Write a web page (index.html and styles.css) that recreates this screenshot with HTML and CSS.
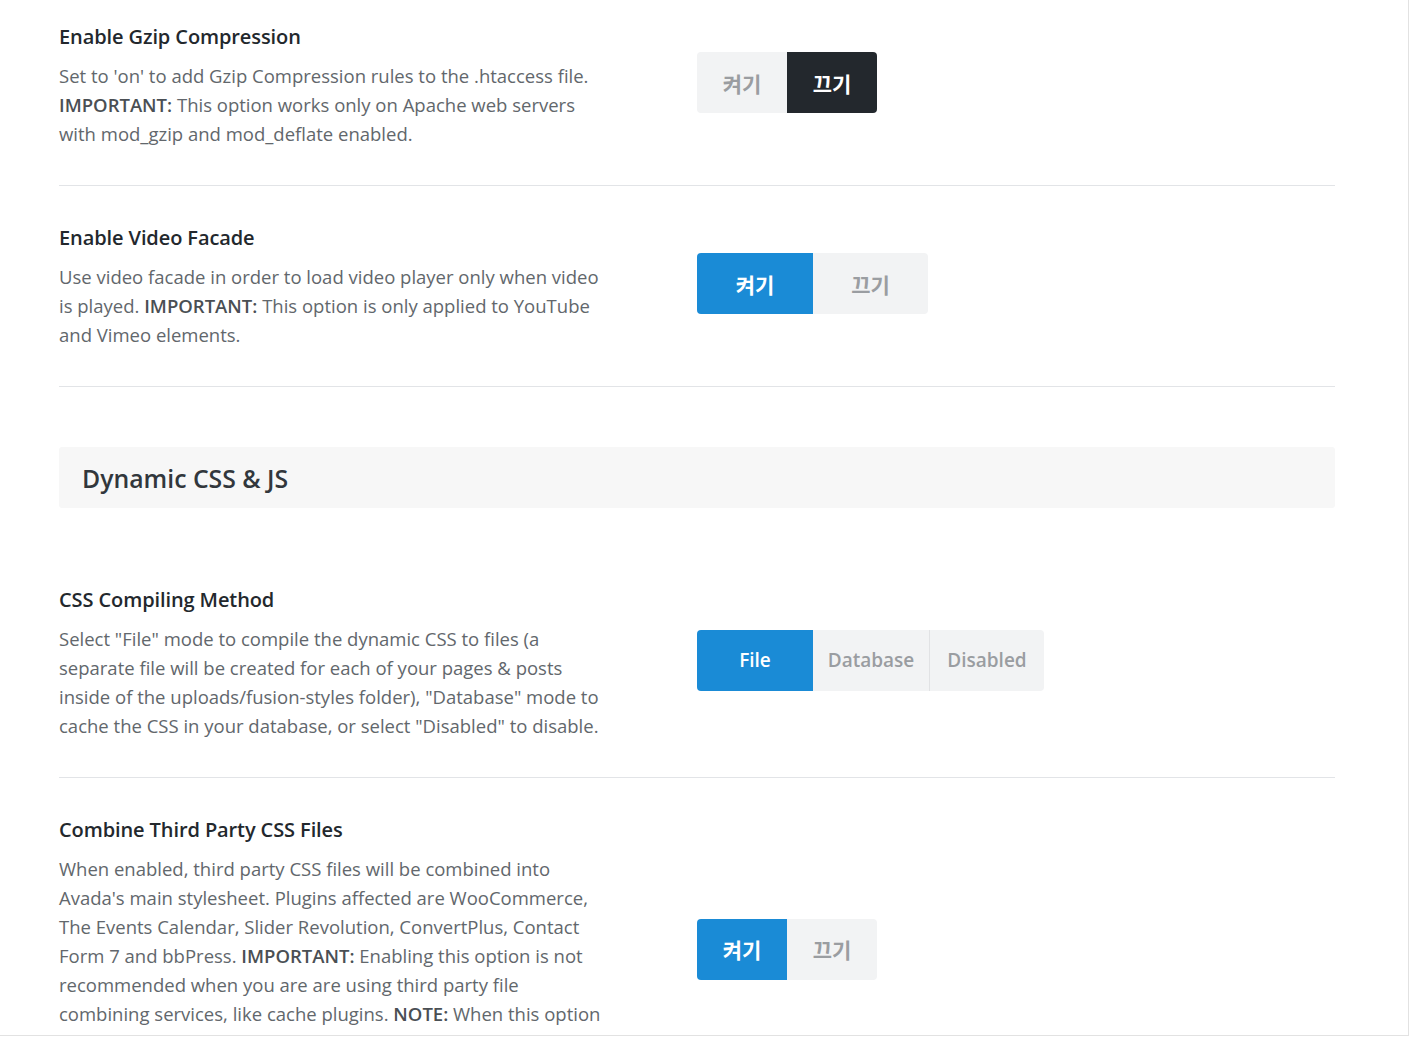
FILE: index.html
```html
<!DOCTYPE html>
<html lang="ko">
<head>
<meta charset="utf-8">
<title>Performance</title>
<link rel="stylesheet" href="styles.css">
</head>
<body>
<div class="frame">
  <div class="content">
    <div class="option">
      <div class="info">
        <h3 class="title">Enable Gzip Compression</h3>
        <p class="desc">Set to 'on' to add Gzip Compression rules to the .htaccess file.<br><strong>IMPORTANT:</strong> This option works only on Apache web servers<br>with mod_gzip and mod_deflate enabled.</p>
      </div>
      <div class="control">
        <div class="btn-group">
          <span class="btn ko w90">켜기</span><span class="btn ko w90 active-dark">끄기</span>
        </div>
      </div>
    </div>

    <div class="option">
      <div class="info">
        <h3 class="title">Enable Video Facade</h3>
        <p class="desc">Use video facade in order to load video player only when video<br>is played. <strong>IMPORTANT:</strong> This option is only applied to YouTube<br>and Vimeo elements.</p>
      </div>
      <div class="control">
        <div class="btn-group">
          <span class="btn ko w116 active-blue">켜기</span><span class="btn ko w115">끄기</span>
        </div>
      </div>
    </div>

    <div class="section-head">Dynamic CSS &amp; JS</div>

    <div class="option">
      <div class="info">
        <h3 class="title">CSS Compiling Method</h3>
        <p class="desc">Select "File" mode to compile the dynamic CSS to files (a<br>separate file will be created for each of your pages &amp; posts<br>inside of the uploads/fusion-styles folder), "Database" mode to<br>cache the CSS in your database, or select "Disabled" to disable.</p>
      </div>
      <div class="control">
        <div class="btn-group">
          <span class="btn w116 active-blue">File</span><span class="btn w116">Database</span><span class="btn w115 sep">Disabled</span>
        </div>
      </div>
    </div>

    <div class="option last">
      <div class="info">
        <h3 class="title">Combine Third Party CSS Files</h3>
        <p class="desc">When enabled, third party CSS files will be combined into<br>Avada's main stylesheet. Plugins affected are WooCommerce,<br>The Events Calendar, Slider Revolution, ConvertPlus, Contact<br>Form 7 and bbPress. <strong>IMPORTANT:</strong> Enabling this option is not<br>recommended when you are are using third party file<br>combining services, like cache plugins. <strong>NOTE:</strong> When this option</p>
      </div>
      <div class="control">
        <div class="btn-group">
          <span class="btn ko w90 active-blue">켜기</span><span class="btn ko w90">끄기</span>
        </div>
      </div>
    </div>
  </div>
</div>
</body>
</html>
```

FILE: styles.css
```css
html, body {
  margin: 0;
  padding: 0;
  background: #ffffff;
  overflow: hidden;
}

body {
  font-family: "Open Sans", "Noto Sans", "Noto Sans CJK KR", sans-serif;
  color: #23282d;
}

.frame {
  width: 1408px;
  height: 1035px;
  border-right: 1px solid #e2e2e2;
  border-bottom: 1px solid #e2e2e2;
  overflow: hidden;
  box-sizing: content-box;
}

.content {
  margin: 0 73px 0 59px;
  padding-top: 25px;
}

.option {
  display: flex;
  align-items: center;
  padding: 0 0 37px;
  border-bottom: 1px solid #e2e4e7;
  margin-bottom: 40px;
}

.option.last {
  border-bottom: none;
  padding-bottom: 0;
}

.info {
  width: 50%;
  flex: none;
}

.title {
  margin: 0;
  font-size: 20px;
  line-height: 24px;
  font-weight: 600;
  color: #23282d;
  letter-spacing: -0.1px;
}

.desc {
  margin: 12px 0 0;
  font-size: 18.5px;
  line-height: 29px;
  color: #62676c;
  white-space: nowrap;
}

.desc strong {
  font-weight: 600;
  color: #4a4f54;
}

.control {
  flex: 1;
  margin-bottom: 8px;
}

.option.last .control {
  margin-bottom: 0;
  margin-top: 52px;
}

.btn-group {
  display: inline-flex;
  border-radius: 4px;
  overflow: hidden;
}

.btn {
  height: 61px;
  display: flex;
  align-items: center;
  justify-content: center;
  background: #f2f3f4;
  color: #9a9da1;
  font-family: "Open Sans", "Noto Sans CJK KR", sans-serif;
  font-size: 19px;
  font-weight: 600;
  box-sizing: border-box;
}

.btn.ko {
  font-family: "Noto Sans CJK KR", sans-serif;
  font-size: 21px;
  font-weight: 700;
}

.w90 { width: 90px; }
.w115 { width: 115px; }
.w116 { width: 116px; }

.btn.sep {
  border-left: 1px solid #e1e2e4;
}

.active-dark {
  background: #23282d;
  color: #ffffff;
}

.active-blue {
  background: #1a8bd6;
  color: #ffffff;
}

.section-head {
  margin: 60px 0 80px;
  height: 61px;
  display: flex;
  align-items: center;
  padding-left: 23px;
  background: #f7f7f7;
  border-radius: 3px;
  font-size: 24.8px;
  font-weight: 600;
  color: #32373c;
}
```
